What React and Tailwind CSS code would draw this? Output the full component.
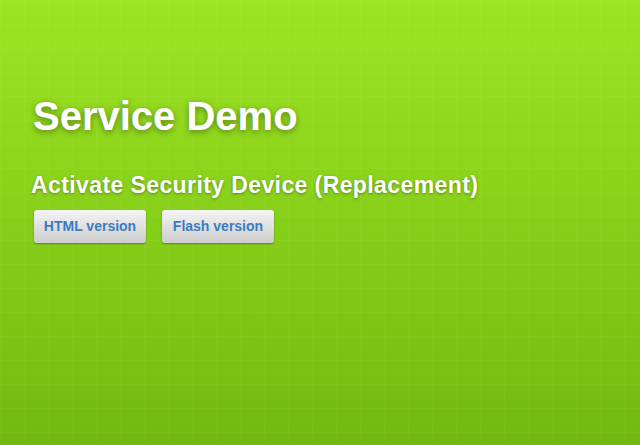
export default function App() {
  const versions = ['HTML version', 'Flash version'];

  return (
    <div className="relative h-[445px] w-[640px] overflow-hidden bg-gradient-to-b from-[#9de523] to-[#72b90f] font-['Liberation_Sans',Arial,sans-serif]">
      {/* faint checker grid over the gradient */}
      <div className="absolute inset-0 bg-[linear-gradient(rgba(255,255,255,0.035)_1px,transparent_1px),linear-gradient(90deg,rgba(255,255,255,0.035)_1px,transparent_1px)] bg-[size:24px_24px]" />

      <div className="relative pl-[33px] pt-[92px]">
        <h1 className="text-[40px] font-bold leading-[48px] text-white [text-shadow:0_2px_6px_rgba(0,0,0,0.4)]">
          Service Demo
        </h1>

        <h2 className="mt-[31px] -ml-[2px] text-[23px] font-bold leading-[28px] tracking-[0.4px] text-white [text-shadow:0_1px_3px_rgba(0,0,0,0.35)]">
          Activate Security Device (Replacement)
        </h2>

        <div className="ml-[1px] mt-[11px] flex gap-[16px]">
          {versions.map((v) => (
            <button
              key={v}
              className="h-[33px] w-[112px] rounded-[3px] bg-gradient-to-b from-[#f4f4f4] to-[#cdcdcd] text-[14px] font-bold text-[#3a7cc1] shadow-[0_1px_2px_rgba(0,0,0,0.35)]"
            >
              {v}
            </button>
          ))}
        </div>
      </div>
    </div>
  );
}
